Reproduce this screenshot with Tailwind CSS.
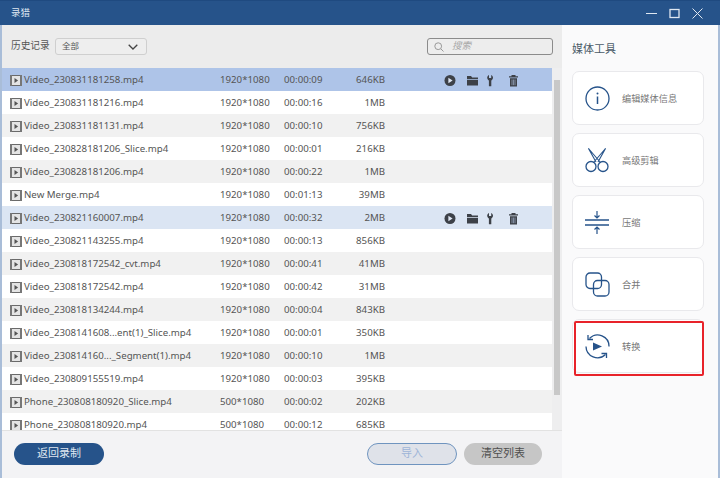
<!DOCTYPE html>
<html><head><meta charset="utf-8">
<script src="https://cdn.jsdelivr.net/npm/@tailwindcss/browser@4"></script>
</head>
<body class="w-[720px] h-[478px] overflow-hidden bg-[#f3f3f5] font-['Noto_Sans','Noto_Sans_CJK_SC',sans-serif] text-[9.7px] text-[#555]">
<svg class="hidden"><defs>
<symbol id="film" viewBox="0 0 12 11"><rect x="0.5" y="0.500" width="11" height="10" fill="#e4e4e4" stroke="#6a6a6a"/><path d="M0 0h2v11H0zM10 0h2v11h-2z" fill="#777"/><path d="M4.500 3l3.600 2.500L4.500 8z" fill="#555"/></symbol>
<symbol id="actions" viewBox="0 0 76 13">
<circle cx="6" cy="6.500" r="5.500" fill="#3d4148"/><path d="M4.400 3.800l4.200 2.700-4.200 2.700z" fill="#dfe6f2"/>
<path d="M23 2h4l1.200 1.500H34V5H23zM23 5.800h11V11.500H23z" fill="#3d4148"/>
<path d="M45 1c-1.200.6-1.800 1.600-1.800 2.800 0 1.200.7 2.100 1.700 2.600v5.500c0 .6 2.400.6 2.400 0V6.400c1-.5 1.700-1.400 1.700-2.600C49 2.600 48.400 1.600 47.200 1v3h-2.200z" fill="#3d4148"/>
<path d="M65 2.300h9v1.300h-9zM67.500 1h4v1.300h-4zM66 4.200h7v8.300h-7z" fill="#3d4148"/><path d="M68 5.500v5.700M69.500 5.500v5.700M71 5.500v5.700" stroke="#aebfdc" stroke-width=".6"/>
</symbol>
</defs></svg>
<div class="flex flex-col h-full">
  <header class="h-[25px] shrink-0 bg-[#26538a] border-t border-[#1f4a80] flex items-center justify-between pl-[11px] pr-[17px] text-[#dfe7f1]">
    <span class="text-[9.5px]">录猎</span>
    <div class="flex items-center gap-[12px]">
      <svg class="w-[11px] h-[11px]" viewBox="0 0 11 11"><path d="M0 5.500h11" stroke="#dfe7f1" stroke-width="1"/></svg>
      <svg class="w-[11px] h-[11px]" viewBox="0 0 11 11"><rect x="1" y="1.500" width="9" height="8" fill="none" stroke="#dfe7f1" stroke-width="1.300"/></svg>
      <svg class="w-[11px] h-[11px]" viewBox="0 0 11 11"><path d="M.5.500l10 10M10.500.500l-10 10" stroke="#dfe7f1" stroke-width="1"/></svg>
    </div>
  </header>
  <div class="flex flex-1 min-h-0 border-l-2 border-r-2 border-l-[#a9bdd8] border-r-[#a9bdd8]">
    <main class="w-[560px] shrink-0 flex flex-col min-h-0">
      <div class="h-[43px] shrink-0 bg-[#ececec] flex items-center pl-[9px] pr-[9px]">
        <span class="w-[44px]">历史记录</span>
        <div class="w-[92px] h-[17px] rounded-[3px] border border-[#cfcfcf] bg-[#eeeeee] flex items-center justify-between pl-[6px] pr-[8px] text-[8.5px]">
          <span>全部</span>
          <svg class="w-[10px] h-[6px]" viewBox="0 0 10 6"><path d="M.7.700L5 5 9.300.700" fill="none" stroke="#444" stroke-width="1.300"/></svg>
        </div>
        <div class="ml-auto w-[126px] h-[17px] rounded-[3px] border border-[#8b8b8b] bg-[#ededed] flex items-center gap-[8px] pl-[6px] text-[9.5px] italic text-[#a8a8a8]">
          <svg class="w-[10px] h-[10px]" viewBox="0 0 10 10"><circle cx="4.200" cy="4.200" r="3.400" fill="none" stroke="#999"/><path d="M6.800 6.800L9.500 9.500" stroke="#999"/></svg>
          <span>搜索</span>
        </div>
      </div>
      <div class="flex flex-1 min-h-0">
        <div class="w-[550px] shrink-0 h-[362px] overflow-hidden">
          <div class="h-[23px] pt-[1px] flex items-center bg-[#aec4e8]"><svg class="w-[12px] h-[11px] ml-[8px] mr-[2px]"><use href="#film"/></svg><span class="w-[196px]">Video_230831181258.mp4</span><span class="w-[64px]">1920*1080</span><span class="w-[64px]">00:00:09</span><span class="w-[37px] text-right">646KB</span><svg class="w-[76px] h-[13px] ml-[59px]"><use href="#actions"/></svg></div>
          <div class="h-[23px] pt-[1px] flex items-center bg-white"><svg class="w-[12px] h-[11px] ml-[8px] mr-[2px]"><use href="#film"/></svg><span class="w-[196px]">Video_230831181216.mp4</span><span class="w-[64px]">1920*1080</span><span class="w-[64px]">00:00:16</span><span class="w-[37px] text-right">1MB</span></div>
          <div class="h-[23px] pt-[1px] flex items-center bg-[#f1f1f1]"><svg class="w-[12px] h-[11px] ml-[8px] mr-[2px]"><use href="#film"/></svg><span class="w-[196px]">Video_230831181131.mp4</span><span class="w-[64px]">1920*1080</span><span class="w-[64px]">00:00:10</span><span class="w-[37px] text-right">756KB</span></div>
          <div class="h-[23px] pt-[1px] flex items-center bg-white"><svg class="w-[12px] h-[11px] ml-[8px] mr-[2px]"><use href="#film"/></svg><span class="w-[196px]">Video_230828181206_Slice.mp4</span><span class="w-[64px]">1920*1080</span><span class="w-[64px]">00:00:01</span><span class="w-[37px] text-right">216KB</span></div>
          <div class="h-[23px] pt-[1px] flex items-center bg-[#f1f1f1]"><svg class="w-[12px] h-[11px] ml-[8px] mr-[2px]"><use href="#film"/></svg><span class="w-[196px]">Video_230828181206.mp4</span><span class="w-[64px]">1920*1080</span><span class="w-[64px]">00:00:22</span><span class="w-[37px] text-right">1MB</span></div>
          <div class="h-[23px] pt-[1px] flex items-center bg-white"><svg class="w-[12px] h-[11px] ml-[8px] mr-[2px]"><use href="#film"/></svg><span class="w-[196px]">New Merge.mp4</span><span class="w-[64px]">1920*1080</span><span class="w-[64px]">00:01:13</span><span class="w-[37px] text-right">39MB</span></div>
          <div class="h-[23px] pt-[1px] flex items-center bg-[#dbe5f3]"><svg class="w-[12px] h-[11px] ml-[8px] mr-[2px]"><use href="#film"/></svg><span class="w-[196px]">Video_230821160007.mp4</span><span class="w-[64px]">1920*1080</span><span class="w-[64px]">00:00:32</span><span class="w-[37px] text-right">2MB</span><svg class="w-[76px] h-[13px] ml-[59px]"><use href="#actions"/></svg></div>
          <div class="h-[23px] pt-[1px] flex items-center bg-white"><svg class="w-[12px] h-[11px] ml-[8px] mr-[2px]"><use href="#film"/></svg><span class="w-[196px]">Video_230821143255.mp4</span><span class="w-[64px]">1920*1080</span><span class="w-[64px]">00:00:13</span><span class="w-[37px] text-right">856KB</span></div>
          <div class="h-[23px] pt-[1px] flex items-center bg-[#f1f1f1]"><svg class="w-[12px] h-[11px] ml-[8px] mr-[2px]"><use href="#film"/></svg><span class="w-[196px]">Video_230818172542_cvt.mp4</span><span class="w-[64px]">1920*1080</span><span class="w-[64px]">00:00:41</span><span class="w-[37px] text-right">41MB</span></div>
          <div class="h-[23px] pt-[1px] flex items-center bg-white"><svg class="w-[12px] h-[11px] ml-[8px] mr-[2px]"><use href="#film"/></svg><span class="w-[196px]">Video_230818172542.mp4</span><span class="w-[64px]">1920*1080</span><span class="w-[64px]">00:00:42</span><span class="w-[37px] text-right">31MB</span></div>
          <div class="h-[23px] pt-[1px] flex items-center bg-[#f1f1f1]"><svg class="w-[12px] h-[11px] ml-[8px] mr-[2px]"><use href="#film"/></svg><span class="w-[196px]">Video_230818134244.mp4</span><span class="w-[64px]">1920*1080</span><span class="w-[64px]">00:00:04</span><span class="w-[37px] text-right">843KB</span></div>
          <div class="h-[23px] pt-[1px] flex items-center bg-white"><svg class="w-[12px] h-[11px] ml-[8px] mr-[2px]"><use href="#film"/></svg><span class="w-[196px]">Video_2308141608...ent(1)_Slice.mp4</span><span class="w-[64px]">1920*1080</span><span class="w-[64px]">00:00:01</span><span class="w-[37px] text-right">350KB</span></div>
          <div class="h-[23px] pt-[1px] flex items-center bg-[#f1f1f1]"><svg class="w-[12px] h-[11px] ml-[8px] mr-[2px]"><use href="#film"/></svg><span class="w-[196px]">Video_230814160..._Segment(1).mp4</span><span class="w-[64px]">1920*1080</span><span class="w-[64px]">00:00:10</span><span class="w-[37px] text-right">1MB</span></div>
          <div class="h-[23px] pt-[1px] flex items-center bg-white"><svg class="w-[12px] h-[11px] ml-[8px] mr-[2px]"><use href="#film"/></svg><span class="w-[196px]">Video_230809155519.mp4</span><span class="w-[64px]">1920*1080</span><span class="w-[64px]">00:00:03</span><span class="w-[37px] text-right">395KB</span></div>
          <div class="h-[23px] pt-[1px] flex items-center bg-[#f1f1f1]"><svg class="w-[12px] h-[11px] ml-[8px] mr-[2px]"><use href="#film"/></svg><span class="w-[196px]">Phone_230808180920_Slice.mp4</span><span class="w-[64px]">500*1080</span><span class="w-[64px]">00:00:02</span><span class="w-[37px] text-right">202KB</span></div>
          <div class="h-[23px] pt-[1px] flex items-center bg-white"><svg class="w-[12px] h-[11px] ml-[8px] mr-[2px]"><use href="#film"/></svg><span class="w-[196px]">Phone_230808180920.mp4</span><span class="w-[64px]">500*1080</span><span class="w-[64px]">00:00:12</span><span class="w-[37px] text-right">685KB</span></div>
        </div>
        <div class="flex-1 h-[362px] bg-[#eeeeef] pt-[12px] pl-[2px]">
          <div class="w-[6px] h-[315px] bg-[#c8c8c8]"></div>
        </div>
      </div>
      <div class="h-[48px] shrink-0 border-t border-[#e2e2e2] flex items-center pl-[12px] pr-[20px] pb-[2px]">
        <button class="w-[90px] h-[22px] rounded-full bg-[#26538a] text-[#dfe7f1] text-[11px]">返回录制</button>
        <button class="ml-auto w-[90px] h-[22px] rounded-full bg-[#dfe2e9] border border-[#6f94bf] text-[#9db4d8] text-[11px]">导入</button>
        <button class="ml-[7px] w-[78px] h-[22px] rounded-full bg-[#c6c6c6] text-[#4f4f4f] text-[11px]">清空列表</button>
      </div>
    </main>
    <aside class="flex-1 bg-[#fafafb] pt-[15px] pl-[10px] pr-[14px] flex flex-col">
      <h2 class="text-[11px] text-[#4a5a68] mb-[14px] leading-[17px]">媒体工具</h2>
      <div class="flex flex-col gap-[8px]">
        <div class="h-[54px] rounded-[7px] border border-[#e9e9ec] bg-white flex items-center pl-[12px] gap-[12px] text-[9.2px] text-[#777]">
          <svg class="w-[25px] h-[25px] shrink-0" viewBox="0 0 25 25"><circle cx="12.500" cy="12.500" r="11.500" fill="none" stroke="#26538a" stroke-width="1.300"/><path d="M12.500 10.500v7.500" stroke="#26538a" stroke-width="1.500"/><circle cx="12.500" cy="7.500" r="1" fill="#26538a"/></svg>
          <span class="mt-[2px]">编辑媒体信息</span>
        </div>
        <div class="h-[54px] rounded-[7px] border border-[#e9e9ec] bg-white flex items-center pl-[12px] gap-[12px] text-[9.2px] text-[#777]">
          <svg class="w-[25px] h-[25px] shrink-0" viewBox="0 0 25 25"><circle cx="6" cy="18.500" r="5" fill="none" stroke="#26538a" stroke-width="1.300"/><circle cx="18" cy="18.500" r="5" fill="none" stroke="#26538a" stroke-width="1.300"/><path d="M3.500 .5L15.500 14.500M3.500 .5L11 14M20.500 .5L8.500 14.500M20.500 .5L13 14" fill="none" stroke="#26538a" stroke-width="1.100"/></svg>
          <span class="mt-[2px]">高级剪辑</span>
        </div>
        <div class="h-[54px] rounded-[7px] border border-[#e9e9ec] bg-white flex items-center pl-[12px] gap-[12px] text-[9.2px] text-[#777]">
          <svg class="w-[25px] h-[25px] shrink-0" viewBox="0 0 25 25"><path d="M0 10h24M0 15h24" stroke="#26538a" stroke-width="1.300"/><path d="M12 1v7M9.500 5.500l2.500 2.500 2.500-2.500M12 24v-7M9.500 19.500l2.500-2.500 2.500 2.500" fill="none" stroke="#26538a" stroke-width="1.200"/></svg>
          <span class="mt-[2px]">压缩</span>
        </div>
        <div class="h-[54px] rounded-[7px] border border-[#e9e9ec] bg-white flex items-center pl-[12px] gap-[12px] text-[9.2px] text-[#777]">
          <svg class="w-[25px] h-[25px] shrink-0" viewBox="0 0 25 25"><rect x="1" y="1" width="15.500" height="15.500" rx="4" fill="none" stroke="#26538a" stroke-width="1.300"/><rect x="8.500" y="8.500" width="15.500" height="15.500" rx="4" fill="none" stroke="#26538a" stroke-width="1.300"/></svg>
          <span class="mt-[2px]">合并</span>
        </div>
        <div class="relative h-[54px] rounded-[7px] border border-[#e9e9ec] bg-white flex items-center pl-[12px] gap-[12px] text-[9.2px] text-[#777]">
          <svg class="w-[25px] h-[25px] shrink-0" viewBox="0 0 25 25"><path d="M4.500 4.500A11.300 11.300 0 0 1 24 12.500M1 12.500A11.500 11.500 0 0 0 20.500 20.500" fill="none" stroke="#26538a" stroke-width="1.300"/><path d="M3 1v4.500h5M21.500 24v-4.500h-5" fill="none" stroke="#26538a" stroke-width="1.300"/><path d="M8 8.500l9 4-9 4z" fill="#26538a"/></svg>
          <span class="mt-[2px]">转换</span>
          <div class="absolute left-[1px] top-[1px] w-[130px] h-[55px] border-2 border-[#e8232a] rounded-[2px]"></div>
        </div>
      </div>
    </aside>
  </div>
</div>
</body></html>
